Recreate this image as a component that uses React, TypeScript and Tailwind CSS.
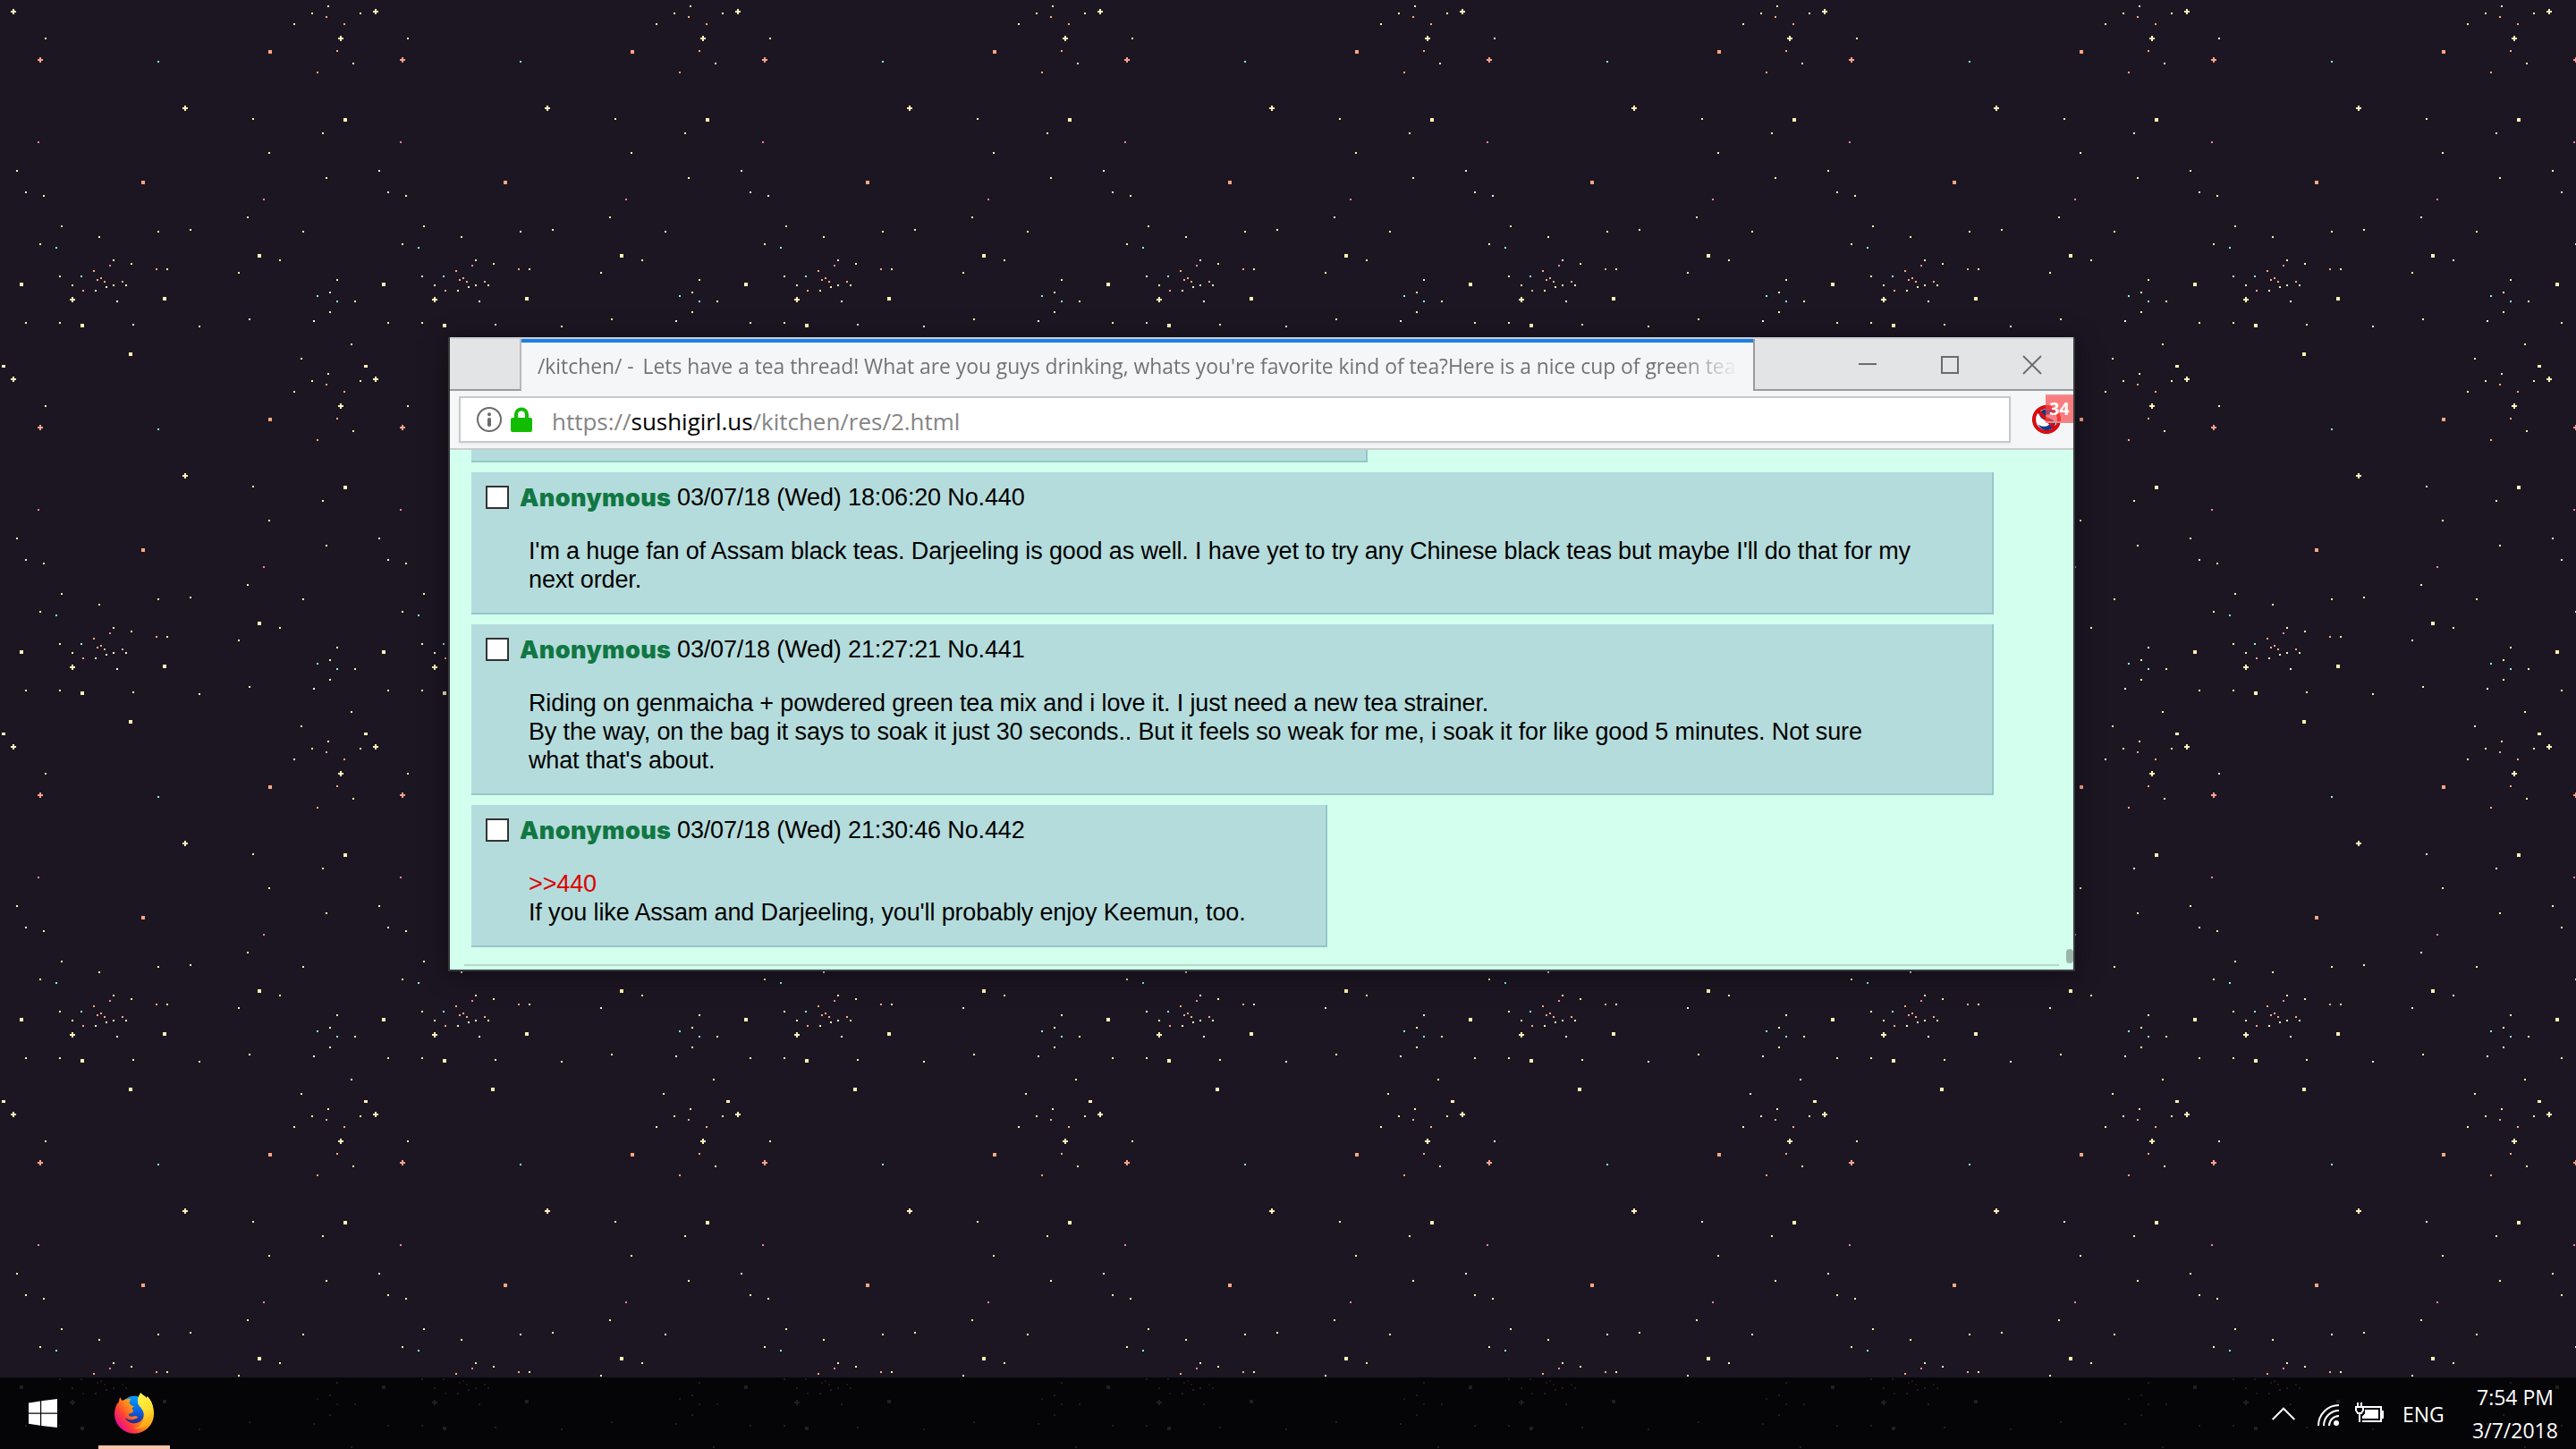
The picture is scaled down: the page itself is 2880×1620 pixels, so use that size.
import type { ReactNode } from "react";

type Star = [number, number];

const TILE_W = 405;
const TILE_H = 411;

const yellow: Star[] = [
  [51, 43], [19, 191], [367, 7], [349, 15], [403, 15], [329, 27], [395, 71], [283, 133], [361, 149], [301, 171], [365, 199],
  [29, 215], [49, 219], [69, 253], [111, 265], [177, 259], [213, 257], [277, 243], [339, 259], [45, 273], [127, 291],
  [147, 295], [187, 301], [67, 309], [313, 291], [267, 305], [377, 313], [81, 319], [107, 325], [119, 321], [127, 319],
  [141, 319], [369, 327], [397, 337], [369, 349], [29, 361], [67, 361], [149, 363], [223, 365], [279, 357], [393, 385],
  [337, 401],
];
const orange: Star[] = [
  [365, 19], [385, 27], [377, 57], [355, 81], [105, 303], [109, 313], [113, 311], [117, 315], [137, 315], [93, 325], [175, 301],
];
const teal: Star[] = [[177, 69], [63, 277], [91, 309], [355, 331], [377, 337]];
const pink: Star[] = [[43, 159], [295, 223], [123, 297]];
const white: Star[] = [[131, 337], [351, 359]];
const bigYellow: Star[] = [[386, 134], [24, 318], [290, 286], [184, 334], [92, 364], [146, 396], [3.5, 409.5]];
const bigOrange: Star[] = [[302, 58], [160, 204]];
const crossYellow: Star[] = [[15, 13], [381, 43], [207, 121], [81, 335]];
const crossOrange: Star[] = [[45, 67]];

function Dots({ at, size, fill }: { at: Star[]; size: number; fill: string }) {
  return (
    <>
      {at.map(([x, y]) => (
        <rect key={`${x}-${y}`} x={x - size / 2} y={y - size / 2} width={size} height={size} fill={fill} />
      ))}
    </>
  );
}

function Crosses({ at, fill }: { at: Star[]; fill: string }) {
  return (
    <>
      {at.map(([x, y]) => (
        <g key={`${x}-${y}`} fill={fill}>
          <rect x={x - 3} y={y - 1} width={6} height={2} />
          <rect x={x - 1} y={y - 3} width={2} height={6} />
        </g>
      ))}
    </>
  );
}

function Starfield() {
  return (
    <svg className="absolute inset-0 h-full w-full" shapeRendering="crispEdges" aria-hidden="true">
      <defs>
        <pattern id="stars" width={TILE_W} height={TILE_H} patternUnits="userSpaceOnUse">
          <Dots at={yellow} size={2} fill="#fff1b5" />
          <Dots at={orange} size={2} fill="#ffa882" />
          <Dots at={teal} size={2} fill="#7dffdd" />
          <Dots at={pink} size={2} fill="#ff7fb4" />
          <Dots at={white} size={2} fill="#ffffff" />
          <Dots at={bigYellow} size={4} fill="#fff0b3" />
          <Dots at={bigOrange} size={4} fill="#ffa682" />
          <Crosses at={crossYellow} fill="#fff0b5" />
          <Crosses at={crossOrange} fill="#ffa08a" />
        </pattern>
      </defs>
      <rect width="100%" height="100%" fill="url(#stars)" />
    </svg>
  );
}

function TitleBar() {
  return (
    <div className="flex h-[60px] border-t-2 border-[#ccd0d6] bg-[#e3e4e6]">
      <div className="w-20 shrink-0 border-r-2 border-b-2 border-r-[#b9babc] border-b-[#9a9b9d]" />
      <div className="flex w-[1377px] shrink-0 items-center overflow-hidden border-t-4 border-[#1a80e6] bg-[#f5f6f7] pr-4 pl-[18px] text-[22.9px] leading-[54px] text-[#737373]">
        <div className="-mt-px w-full overflow-hidden tracking-[-0.03px] whitespace-nowrap [mask-image:linear-gradient(to_right,black_calc(100%-70px),transparent)]">
          /kitchen/ <span className="mr-1">-</span> Lets have a tea thread! What are you guys drinking, whats you're favorite kind of tea?Here is a nice cup of green tea
        </div>
      </div>
      <div className="flex flex-1 justify-end border-b-2 border-l-2 border-[#9a9b9d] text-[#6b6b6d]">
        <div className="flex w-[92px] items-center justify-center">
          <div className="h-0.5 w-5 bg-current" />
        </div>
        <div className="flex w-[92px] items-center justify-center">
          <div className="mt-0.5 h-5 w-5 border-2 border-current" />
        </div>
        <div className="flex w-[92px] items-center justify-center">
          <svg className="mt-0.5 h-[22px] w-[22px]" viewBox="0 0 22 22" stroke="currentColor" strokeWidth="1.8">
            <path d="M1 1l20 20M21 1L1 21" />
          </svg>
        </div>
      </div>
    </div>
  );
}

function InfoIcon() {
  return (
    <svg className="h-7 w-7" viewBox="0 0 28 28">
      <circle cx="14" cy="14" r="13" fill="none" stroke="#6b6b6b" strokeWidth="2" />
      <circle cx="14" cy="8.2" r="2" fill="#6b6b6b" />
      <rect x="12" y="12" width="4" height="10" rx="1.8" fill="#6b6b6b" />
    </svg>
  );
}

function LockIcon() {
  return (
    <svg className="h-7 w-6" viewBox="0 0 24 28">
      <path d="M6 14V8.500a6 6 0 0 1 12 0V14" fill="none" stroke="#12bc00" strokeWidth="4.200" />
      <rect x="0" y="12" width="24" height="16" rx="2" fill="#12bc00" />
    </svg>
  );
}

function BlockerIcon() {
  return (
    <svg className="h-8 w-8" viewBox="0 0 32 32">
      <circle cx="16" cy="16" r="14" fill="#f4f4f6" />
      <path
        d="M25 7C20 2.500 10 3.500 8 9C7 14 12 16 17 18L6 20C8 26 13 29 18 28C24 27 28 21 25 16L18 12L26 10Z"
        fill="#123a8a"
      />
      <path d="M4.500 10C4 16 5 21 8 22.500C12 24.500 18 24 19.500 21C18 17 10 17 8 11Z" fill="#fff" />
      <path d="M15 11.500C18 9 24 10 27 14C27.500 17 27 19 25.500 20C24 16 20 15 16.500 13.500Z" fill="#fff" />
      <path d="M6 6L26 26" stroke="#e00a0c" strokeWidth="3.800" />
      <circle cx="16" cy="16" r="14" fill="none" stroke="#a80406" strokeWidth="4" />
      <circle cx="16" cy="16" r="14" fill="none" stroke="#e60a0c" strokeWidth="2.800" />
    </svg>
  );
}

function Toolbar() {
  return (
    <div className="flex h-[66px] items-start border-b-2 border-[#c9cccd] bg-[#f5f6f7] pt-1.5 pl-2.5">
      <div className="flex h-[52px] w-[1735px] items-center border-2 border-[#c8c9ca] bg-white pl-[18px] shadow-[0_2px_3px_rgba(0,0,0,0.05)]">
        <InfoIcon />
        <div className="ml-2.5 flex">
          <LockIcon />
        </div>
        <div className="ml-[22px] pt-[3px] text-[25.96px] leading-9 text-[#858585]">
          https://<span className="text-black">sushigirl.us</span>/kitchen/res/2.html
        </div>
      </div>
      <div className="relative ml-6 h-[58px] flex-1">
        <div className="pt-2.5">
          <BlockerIcon />
        </div>
        <div className="absolute -top-0.5 right-0 flex h-8 w-[31px] items-center justify-center border-y-2 border-t-[#f08e90] border-b-[#dd8f91] bg-[#fb4a4c]/70 text-[19.5px] leading-none font-bold text-white">
          34
        </div>
      </div>
    </div>
  );
}

function Post({ stamp, children, width }: { stamp: string; children: ReactNode; width: string }) {
  return (
    <article className={`${width} border-r-2 border-b-2 border-[#93c8c8] bg-[#b5dcdc] pt-3 pb-[21px] pl-4`}>
      <header className="flex h-8 items-start leading-8">
        <span className="mt-[3px] mr-3 h-[26px] w-[26px] shrink-0 border-2 border-[#333] bg-white" />
        <span className="w-44 pt-px font-[Inter] text-[27px] leading-8 font-black tracking-[0.4px] text-[#117743]">Anonymous</span>
        <span>{stamp}</span>
      </header>
      <div className="mt-7 ml-12 leading-8 whitespace-nowrap">{children}</div>
    </article>
  );
}

function Thread() {
  return (
    <div className="relative flex h-[581px] flex-col items-start gap-[11px] overflow-hidden bg-[#d2ffee] pl-6 font-['Liberation_Sans'] text-[27px] tracking-[-0.14px] text-black">
      <div className="h-3.5 w-[1002px] shrink-0 border-r-2 border-b-2 border-[#93c8c8] bg-[#b5dcdc]" />
      <Post stamp="03/07/18 (Wed) 18:06:20 No.440" width="w-[1702px]">
        I'm a huge fan of Assam black teas. Darjeeling is good as well. I have yet to try any Chinese black teas but maybe I'll do that for my
        <br />
        next order.
      </Post>
      <Post stamp="03/07/18 (Wed) 21:27:21 No.441" width="w-[1702px]">
        Riding on genmaicha + powdered green tea mix and i love it. I just need a new tea strainer.
        <br />
        By the way, on the bag it says to soak it just 30 seconds.. But it feels so weak for me, i soak it for like good 5 minutes. Not sure
        <br />
        what that's about.
      </Post>
      <Post stamp="03/07/18 (Wed) 21:30:46 No.442" width="w-[957px]">
        <span className="text-[#d00]">&gt;&gt;440</span>
        <br />
        If you like Assam and Darjeeling, you'll probably enjoy Keemun, too.
      </Post>
      <div className="mt-2 -ml-2 h-0.5 w-[1783px] shrink-0 bg-[#b7d9c6]" />
      <div className="absolute right-0 bottom-[7px] h-4 w-2 rounded-full bg-[#9cb5aa]" />
    </div>
  );
}

function WindowsIcon() {
  return (
    <svg className="h-8 w-8" viewBox="0 0 32 32" fill="#fff">
      <path d="M0 4.500L13 2.500V15.500H0zM14.200 2.300L32 0V15.500H14.200zM0 16.700H13V29.700L0 27.700zM14.200 16.700H32V32L14.200 29.900z" />
    </svg>
  );
}

function FirefoxIcon() {
  return (
    <svg className="h-[46px] w-[46px]" viewBox="381 79 138 138">
      <defs>
        <linearGradient id="globe" x1="0.600" y1="0" x2="0.450" y2="1">
          <stop offset="0" stopColor="#00a3ff" />
          <stop offset="0.550" stopColor="#0a5fe0" />
          <stop offset="1" stopColor="#321a80" />
        </linearGradient>
        <linearGradient id="fox" x1="0.900" y1="0.100" x2="0.080" y2="0.750">
          <stop offset="0" stopColor="#fff14a" />
          <stop offset="0.300" stopColor="#ffbd1e" />
          <stop offset="0.550" stopColor="#ff8a16" />
          <stop offset="0.800" stopColor="#ff3b3a" />
          <stop offset="1" stopColor="#e8128c" />
        </linearGradient>
        <linearGradient id="tail" x1="0.300" y1="0" x2="0.500" y2="1">
          <stop offset="0" stopColor="#fff44f" />
          <stop offset="0.500" stopColor="#ffdf2e" />
          <stop offset="1" stopColor="#ff9f14" />
        </linearGradient>
      </defs>
      <circle cx="450" cy="138" r="48" fill="url(#globe)" />
      <path
        d="M403 94C400 100 400 104 399 109C389 120 384 134 384 151A66 65 0 0 0 516 151C516 125 508 105 494 92L492 98C487 90 478 88 472 80C463 91 460 105 464 118C472 130 482 138 482 152C482 171 468 182 451 182C436 182 424 174 419 163L430 168C441 173 452 168 462 163C462 158 456 157 448 158C440 162 432 158 431 151C436 148 442 147 446 144L447 137L441 133L450 125C444 123 438 121 434 115C433 109 436 104 440 99C428 99 418 101 411 106C407 102 404 98 403 94Z"
        fill="url(#fox)"
      />
      <path
        d="M472 80C463 91 460 105 464 118C472 130 483 138 484 155C484 178 468 196 450 200C480 202 506 186 513 156C518 130 508 105 494 92L492 98C487 90 478 88 472 80Z"
        fill="url(#tail)"
      />
    </svg>
  );
}

function Tray() {
  return (
    <div className="flex h-full items-center pr-[19px] text-[23px] text-white">
      <svg className="h-[15px] w-[26px]" viewBox="0 0 26 15" fill="none" stroke="#fff" strokeWidth="2">
        <path d="M0.700 14L13 1.700L25.300 14" />
      </svg>
      <svg className="ml-[25px] h-6 w-6 translate-y-0.5" viewBox="0 0 24 24" fill="none" stroke="#fff" strokeWidth="2">
        <circle cx="21" cy="21" r="3" fill="#fff" stroke="none" />
        <path d="M13 24A11 11 0 0 1 24 13M7 24A17 17 0 0 1 24 7M1 24A23 23 0 0 1 24 1" />
      </svg>
      <svg className="ml-[18px] h-[22px] w-8 -translate-y-px" viewBox="0 0 32 22" shapeRendering="crispEdges">
        <path d="M10 5H29V21H8M29 9.500H31V16.500H29" fill="none" stroke="#fff" strokeWidth="2" />
        <path d="M11 8H26V18H8V16L11 12Z" fill="#fff" />
        <path d="M0 4H10V9L7.500 13H2.500L0 9Z" fill="#fff" shapeRendering="auto" />
        <path d="M2 6H8V8.500L6.500 11H3.500L2 8.500Z" fill="#050507" shapeRendering="auto" />
        <path d="M2 0H4V5H2zM6 0H8V5H6zM4 12H6V22H4z" fill="#fff" />
      </svg>
      <div className="ml-[21px] w-[46px] pt-0.5">ENG</div>
      <div className="ml-[31px] w-[98px] pt-px text-center leading-[37px] whitespace-nowrap">
        <div>7:54 PM</div>
        <div>3/7/2018</div>
      </div>
    </div>
  );
}

export default function App() {
  return (
    <div className="relative flex h-[1620px] w-[2880px] flex-col justify-end overflow-hidden bg-[#1c1622] font-['Open_Sans',sans-serif]">
      <Starfield />
      <main className="absolute top-[377px] left-[501px] w-[1819px] border-x-2 border-b-2 border-[#38383d] shadow-[0_4px_24px_rgba(10,8,14,0.6)]">
        <TitleBar />
        <Toolbar />
        <Thread />
      </main>
      <footer className="relative flex h-20 items-center justify-between bg-[#020203]/88">
        <div className="flex h-full">
          <div className="flex w-[110px] items-center pl-8">
            <WindowsIcon />
          </div>
          <div className="flex w-20 items-center justify-center border-b-4 border-[#fbc4a8] pt-1">
            <FirefoxIcon />
          </div>
        </div>
        <Tray />
      </footer>
    </div>
  );
}
